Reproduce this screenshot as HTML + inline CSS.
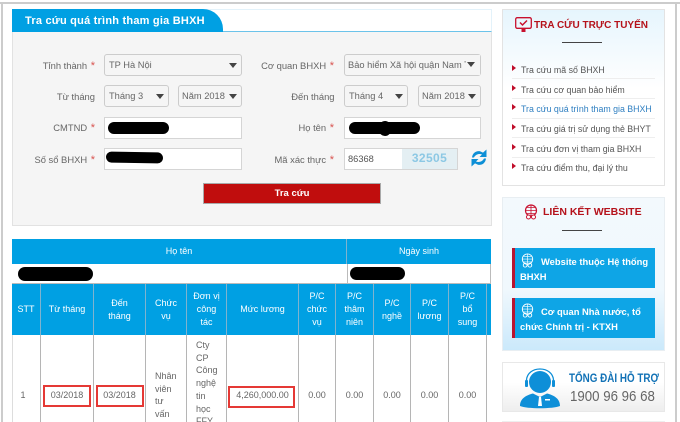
<!DOCTYPE html>
<html><head><meta charset="utf-8"><style>
html,body{margin:0;padding:0;background:#fff;width:680px;height:422px;overflow:hidden}
#w{width:680px;height:422px;position:relative;overflow:hidden;font-family:"Liberation Sans",sans-serif;font-size:9.5px;color:#666}
.a{position:absolute;white-space:nowrap}
.l{position:absolute;text-align:right;white-space:nowrap;color:#666;font-size:9.4px;line-height:14px}
.l b{color:#d9534f;font-weight:normal;font-size:11px;margin-left:1px}
.f{position:absolute;box-sizing:border-box;height:22px;background:#f5f5f5;border:1px solid #ccc;border-radius:3px;line-height:20px;padding-left:4px;color:#666;font-size:9.3px;white-space:nowrap;overflow:hidden}
.f i{position:absolute;right:4px;top:7.5px;width:0;height:0;border-left:4.5px solid transparent;border-right:4.5px solid transparent;border-top:5px solid #444}
.n{position:absolute;box-sizing:border-box;height:22px;background:#fff;border:1px solid #d5d5d5}
.s{position:absolute;background:#000;border-radius:7px}
.h{position:absolute;top:284px;height:51px;display:flex;align-items:center;justify-content:center;text-align:center;color:#fff;font-size:9px;line-height:12.7px;box-sizing:border-box;border-right:1px solid #7fb3cf;background:#00a0e3}
.d{position:absolute;top:335px;height:87px;box-sizing:border-box;border-right:1px solid #b5b5b5;padding-top:53.6px;text-align:center;color:#666;font-size:9px;line-height:12.7px;overflow:hidden;white-space:nowrap}
.r{position:absolute;box-sizing:border-box;border:2px solid #e53935;height:22px;background:transparent}
.m{position:absolute;left:521px;color:#555;font-size:8.8px;line-height:12px;white-space:nowrap}
.t{position:absolute;left:512px;width:0;height:0;border-top:3px solid transparent;border-bottom:3px solid transparent;border-left:4px solid #c00d2a}
.sep{position:absolute;left:512px;width:143px;height:1px;background:#eee}
.btn{position:absolute;left:512px;width:143px;background:#0ea5e6;border-left:3px solid #b8152f;box-sizing:border-box;color:#fff;font-weight:bold;font-size:9.4px;line-height:15px;padding:5px 0 0 5px;white-space:nowrap}
</style></head><body><div id="w">
<div class="a" style="left:0;top:2px;width:680px;height:2px;background:#ccc"></div>
<div class="a" style="left:1px;top:3px;width:1.5px;height:419px;background:#ccc"></div>
<div class="a" style="left:675px;top:3px;width:2px;height:419px;background:#ccc"></div>

<!-- form panel -->
<div class="a" style="left:12px;top:9px;width:480px;height:23px;box-sizing:border-box;background:#fff;border:1px solid #e3f2fa;border-bottom:1px solid #6cc3ea"></div>
<div class="a" style="left:12px;top:9px;width:211px;height:23px;background:#00a0e3;border-radius:0 20px 0 0;color:#fff;font-weight:bold;font-size:11px;line-height:24px;text-indent:13px;letter-spacing:.22px">Tra cứu quá trình tham gia BHXH</div>
<div class="a" style="left:12px;top:32px;width:480px;height:194px;box-sizing:border-box;background:#f5f5f5;border:1px solid #e2e2e2;border-top:0;border-width:0 1.5px 1.5px 1.5px"></div>

<div class="l" style="left:20px;width:75px;top:59px">Tỉnh thành <b>*</b></div>
<div class="l" style="left:20px;width:75px;top:90px">Từ tháng</div>
<div class="l" style="left:20px;width:75px;top:121px">CMTND <b>*</b></div>
<div class="l" style="left:20px;width:75px;top:153px">Số sổ BHXH <b>*</b></div>
<div class="l" style="left:250px;width:84px;top:59px">Cơ quan BHXH <b>*</b></div>
<div class="l" style="left:250px;width:84.5px;top:90px">Đến tháng</div>
<div class="l" style="left:250px;width:84px;top:121px">Họ tên <b>*</b></div>
<div class="l" style="left:250px;width:84px;top:153px">Mã xác thực <b>*</b></div>

<div class="f" style="left:104px;top:54px;width:138px">TP Hà Nội<i></i></div>
<div class="f" style="left:104px;top:85px;width:65px">Tháng 3<i></i></div>
<div class="f" style="left:178px;top:85px;width:64px;padding-left:3px">Năm 2018<i></i></div>
<div class="f" style="left:344px;top:54px;width:137px;padding-left:3px">Bảo hiểm Xã hội quận Nam Từ</div>
<div class="a" style="left:466px;top:55px;width:14px;height:20px;background:#f5f5f5"></div>
<div class="a" style="left:467px;top:62px;width:0;height:0;border-left:4.5px solid transparent;border-right:4.5px solid transparent;border-top:5px solid #444"></div>
<div class="f" style="left:344px;top:85px;width:64px">Tháng 4<i></i></div>
<div class="f" style="left:418px;top:85px;width:63px;padding-left:3px">Năm 2018<i></i></div>

<div class="n" style="left:104px;top:117px;width:138px"></div>
<div class="n" style="left:104px;top:148px;width:138px"></div>
<div class="n" style="left:344px;top:117px;width:137px"></div>
<div class="n" style="left:344px;top:148px;width:114px;color:#555;line-height:20px;padding-left:3px;font-size:9.3px">86368</div>
<div class="a" style="left:402px;top:149px;width:55px;height:20px;background:#e4eff3;color:#8cc8e4;font-weight:bold;font-size:12px;line-height:18px;text-align:center;letter-spacing:.4px;">32505</div>

<div class="s" style="left:108px;top:122px;width:61px;height:12px"></div>
<div class="s" style="left:106px;top:152px;width:57px;height:11px;transform:rotate(1deg)"></div>
<div class="s" style="left:349px;top:122px;width:71px;height:12px"></div>
<div class="s" style="left:379px;top:121px;width:12px;height:15px"></div>

<svg class="a" style="left:470px;top:148px" width="18" height="20" viewBox="0 0 18 20"><path d="M2 9.500C2.500 5 6 2.500 10 3.200L13 4.600L16.500 1.500V9H9.500L12 6.500C9 5.300 5.500 6.500 4 9.500Z" fill="#0d8fd6"/><path d="M16 10.500C15.500 15 12 17.500 8 16.800L5 15.400L1.500 18.500V11H8.500L6 13.500C9 14.700 12.500 13.500 14 10.500Z" fill="#0d8fd6"/></svg>

<div class="a" style="left:203px;top:183px;width:178px;height:21px;box-sizing:border-box;background:#c00d0d;border:1px solid #a9a9a9;color:#fff;font-weight:bold;font-size:9.5px;line-height:19px;text-align:center">Tra cứu</div>

<!-- table -->
<div class="a" style="left:12px;top:239px;width:335px;height:25px;background:#00a0e3;color:#fff;font-size:9px;line-height:25px;text-align:center;border-right:1px solid #7fb3cf;box-sizing:border-box">Họ tên</div>
<div class="a" style="left:347px;top:239px;width:144px;height:25px;background:#00a0e3;color:#fff;font-size:9px;line-height:25px;text-align:center">Ngày sinh</div>
<div class="a" style="left:12px;top:264px;width:479px;height:20px;background:#fff;border-bottom:1px solid #bbb;box-sizing:border-box"></div>
<div class="a" style="left:347px;top:264px;width:1px;height:20px;background:#bbb"></div>
<div class="a" style="left:490px;top:264px;width:1px;height:20px;background:#bbb"></div>
<div class="s" style="left:18px;top:267px;width:75px;height:14px"></div>
<div class="s" style="left:350px;top:267px;width:55px;height:13px"></div>

<div class="h" style="left:12px;width:29px">STT</div>
<div class="h" style="left:41px;width:53px">Từ tháng</div>
<div class="h" style="left:94px;width:52px">Đến<br>tháng</div>
<div class="h" style="left:146px;width:41px">Chức<br>vụ</div>
<div class="h" style="left:187px;width:40px">Đơn vị<br>công<br>tác</div>
<div class="h" style="left:227px;width:72px">Mức lương</div>
<div class="h" style="left:299px;width:37px">P/C<br>chức<br>vụ</div>
<div class="h" style="left:336px;width:38px">P/C<br>thâm<br>niên</div>
<div class="h" style="left:374px;width:37px">P/C<br>nghề</div>
<div class="h" style="left:411px;width:38px">P/C<br>lương</div>
<div class="h" style="left:449px;width:38px">P/C<br>bổ<br>sung</div>
<div class="h" style="left:487px;width:4px;border:0"></div>

<div class="a" style="left:12px;top:335px;width:1px;height:87px;background:#ddd"></div>
<div class="d" style="left:12px;width:29px;padding-right:6px;">1</div>
<div class="d" style="left:41px;width:53px">03/2018</div>
<div class="d" style="left:94px;width:52px">03/2018</div>
<div class="d" style="left:146px;width:41px;text-align:left;padding:35px 0 0 9px">Nhân<br>viên<br>tư<br>vấn</div>
<div class="d" style="left:187px;width:40px;text-align:left;padding:4px 0 0 9px">Cty<br>CP<br>Công<br>nghệ<br>tin<br>học<br>FFY</div>
<div class="d" style="left:227px;width:72px">4,260,000.00</div>
<div class="d" style="left:299px;width:37px">0.00</div>
<div class="d" style="left:336px;width:38px">0.00</div>
<div class="d" style="left:374px;width:37px">0.00</div>
<div class="d" style="left:411px;width:38px">0.00</div>
<div class="d" style="left:449px;width:38px">0.00</div>
<div class="r" style="left:43px;top:385px;width:48px"></div>
<div class="r" style="left:96px;top:385px;width:48px"></div>
<div class="r" style="left:228px;top:386px;width:67px"></div>

<!-- sidebar 1 -->
<div class="a" style="left:502px;top:9px;width:163px;height:177px;box-sizing:border-box;border:1px solid #e3e3e3;background:linear-gradient(#e6f5fd,#fff 45%)"></div>
<svg class="a" style="left:515px;top:17px" width="17" height="16" viewBox="0 0 17 16"><rect x=".7" y=".7" width="15.600" height="10.600" rx="1.500" fill="none" stroke="#c8102e" stroke-width="1.300"/><path d="M5 5.500L7.500 8L12 3.500" fill="none" stroke="#c8102e" stroke-width="1.500"/><rect x="6.500" y="12" width="4" height="3" fill="#c8102e"/></svg>
<div class="a" style="left:534px;top:19px;color:#b5121b;font-weight:bold;font-size:10px;line-height:14px">TRA CỨU TRỰC TUYẾN</div>
<div class="a" style="left:562px;top:42px;width:40px;height:1px;background:#444"></div>

<div class="t" style="top:65px"></div><div class="m" style="top:63.500px">Tra cứu mã số BHXH</div><div class="sep" style="top:78px"></div>
<div class="t" style="top:85px"></div><div class="m" style="top:83.500px">Tra cứu cơ quan bảo hiểm</div><div class="sep" style="top:98px"></div>
<div class="t" style="top:104px"></div><div class="m" style="top:103px;color:#2f7fc1">Tra cứu quá trình tham gia BHXH</div><div class="sep" style="top:118px"></div>
<div class="t" style="top:124px"></div><div class="m" style="top:122.500px">Tra cứu giá trị sử dụng thẻ BHYT</div><div class="sep" style="top:137px"></div>
<div class="t" style="top:144px"></div><div class="m" style="top:142.500px">Tra cứu đơn vị tham gia BHXH</div><div class="sep" style="top:157px"></div>
<div class="t" style="top:163px"></div><div class="m" style="top:161.500px">Tra cứu điểm thu, đại lý thu</div>

<!-- sidebar 2 -->
<div class="a" style="left:502px;top:197px;width:163px;height:154px;box-sizing:border-box;border:1px solid #e8eef2;background:linear-gradient(#f3f9fd,#f0f8fd 60%,#cbe9fb)"></div>
<svg class="a" style="left:523px;top:204px" width="16" height="16" viewBox="0 0 16 16" fill="none" stroke="#c8102e"><circle cx="8" cy="6.500" r="5.500" stroke-width="1.200"/><path d="M2.500 6.500H13.500M8 1V12M4 3.500H12M4 9.500H12" stroke-width=".8"/><circle cx="5.500" cy="13" r="2" fill="#fff"/><circle cx="10.500" cy="13" r="2" fill="#fff"/></svg>
<div class="a" style="left:543px;top:206px;color:#b5121b;font-weight:bold;font-size:10.5px;line-height:13px">LIÊN KẾT WEBSITE</div>
<div class="a" style="left:562px;top:230px;width:40px;height:1px;background:#444"></div>

<div class="btn" style="top:248px;height:40px"><svg style="vertical-align:-3px;margin-right:6px" width="15" height="15" viewBox="0 0 16 16" fill="none" stroke="#fff"><circle cx="8" cy="6.500" r="5.500" stroke-width="1"/><path d="M2.500 6.500H13.500M8 1V12M4 3.500H12M4 9.500H12" stroke-width=".7"/><circle cx="5.500" cy="13" r="2"/><circle cx="10.500" cy="13" r="2"/></svg>Website thuộc Hệ thống<br>BHXH</div>
<div class="btn" style="top:298px;height:40px"><svg style="vertical-align:-3px;margin-right:6px" width="15" height="15" viewBox="0 0 16 16" fill="none" stroke="#fff"><circle cx="8" cy="6.500" r="5.500" stroke-width="1"/><path d="M2.500 6.500H13.500M8 1V12M4 3.500H12M4 9.500H12" stroke-width=".7"/><circle cx="5.500" cy="13" r="2"/><circle cx="10.500" cy="13" r="2"/></svg>Cơ quan Nhà nước, tổ<br>chức Chính trị - KTXH</div>

<!-- sidebar 3 -->
<div class="a" style="left:502px;top:362px;width:163px;height:50px;box-sizing:border-box;border:1px solid #e8e8e8;background:linear-gradient(#fff 40%,#eee)"></div>
<svg class="a" style="left:519px;top:368px" width="42" height="41" viewBox="0 0 42 41"><circle cx="21" cy="14" r="11" fill="#0e8fd8"/><path d="M7.500 16V12C8 5 14 1 21 1S34 5 34.500 12V16" fill="none" stroke="#0e8fd8" stroke-width="1.300"/><rect x="6" y="12" width="3" height="7" rx="1" fill="#0e8fd8"/><rect x="33" y="12" width="3" height="7" rx="1" fill="#0e8fd8"/><path d="M1 38C1 30 8 27 14 25.500L21 29L28 25.500C34 27 41 30 41 38C34 41 8 41 1 38Z" fill="#0e8fd8"/><path d="M20 29H22L23 38H19Z" fill="#fff"/><rect x="26" y="31" width="5" height="1.500" fill="#fff"/></svg>
<div class="a" style="left:569px;top:371px;color:#1272b6;font-weight:bold;font-size:12px;line-height:15px;transform:scaleX(.82);transform-origin:0 0">TỔNG ĐÀI HỖ TRỢ</div>
<div class="a" style="left:570px;top:388px;color:#666;font-size:15px;line-height:18px;transform:scaleX(.885);transform-origin:0 0">1900 96 96 68</div>
<div class="a" style="left:502px;top:421px;width:163px;height:1px;background:#eee"></div>
</div></body></html>
